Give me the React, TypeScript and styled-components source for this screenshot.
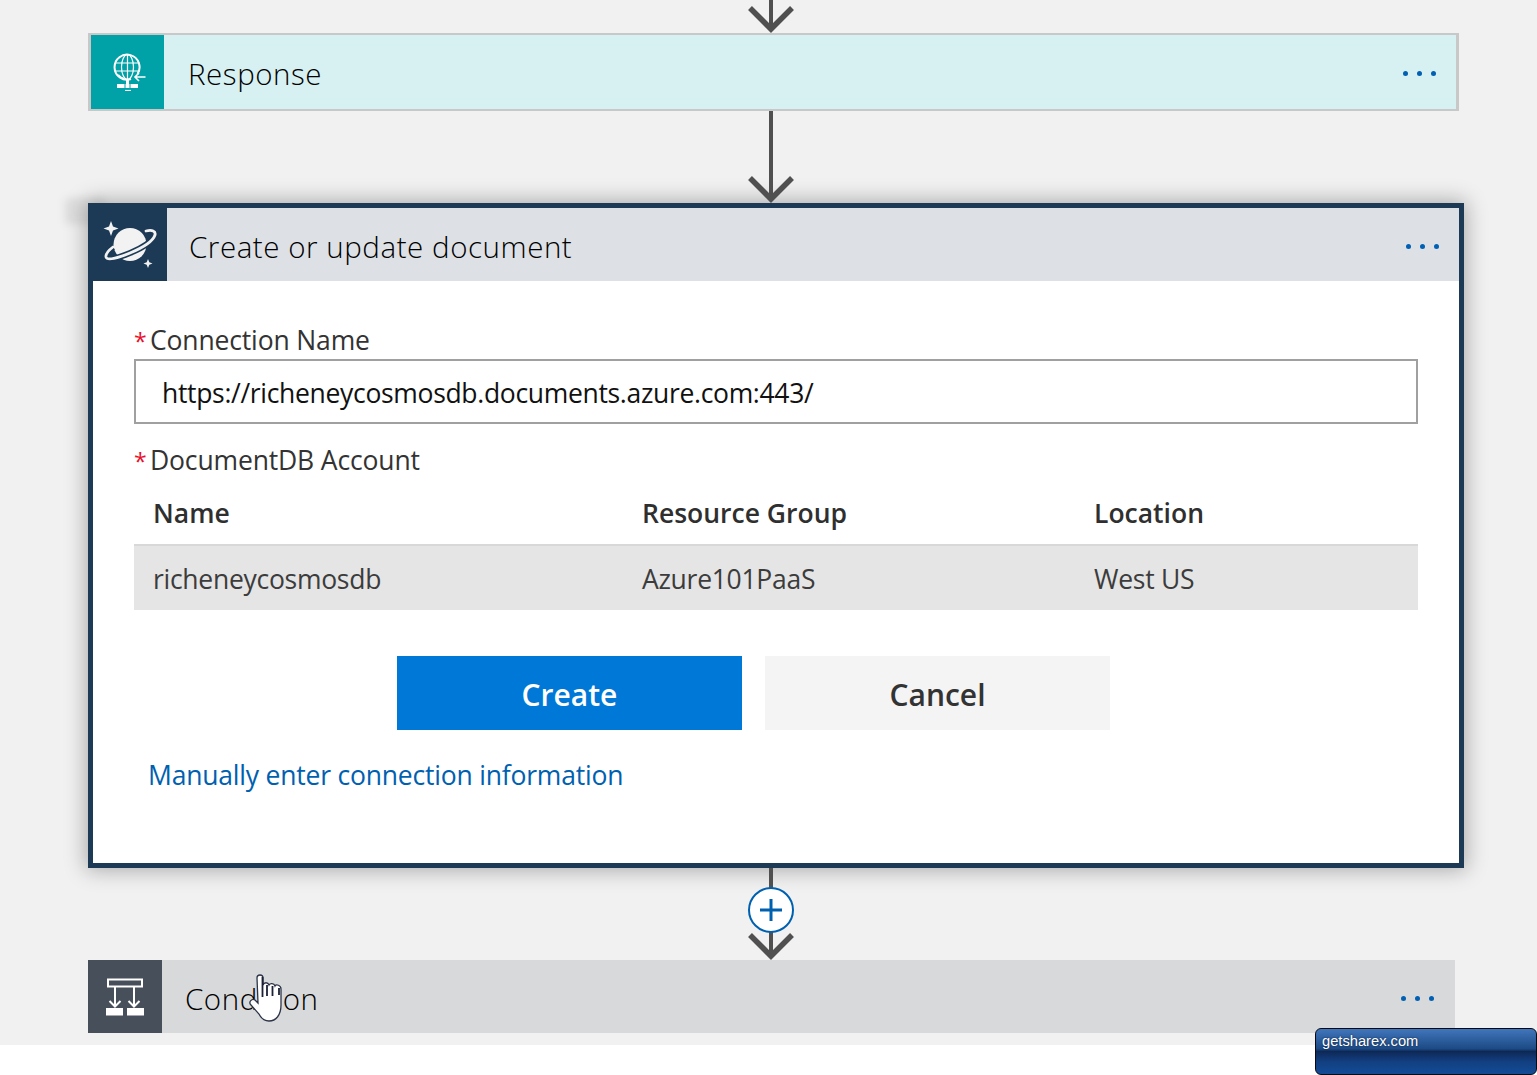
import styled, { createGlobalStyle } from "styled-components";

const Global = createGlobalStyle`
  html, body {
    margin: 0;
    padding: 0;
    background: #fff;
  }
  body {
    font-family: "Open Sans", "Noto Sans", sans-serif;
  }
`;

const Page = styled.div`
  position: relative;
  width: 1537px;
  height: 1075px;
  overflow: hidden;
  background: #fff;
`;

const Designer = styled.div`
  isolation: isolate;
  height: 1045px;
  padding-left: 88px;
  background: #f1f1f1;
  display: flex;
  flex-direction: column;
  align-items: flex-start;
`;

const Connector = styled.svg<{ $h: number }>`
  display: block;
  flex: none;
  width: 50px;
  height: ${(p) => p.$h}px;
  margin-left: 658px;
  position: relative;
  z-index: 2;
`;

const Step = styled.div<{ $w: number; $bg: string; $border: string }>`
  box-sizing: border-box;
  flex: none;
  width: ${(p) => p.$w}px;
  background: ${(p) => p.$bg};
  border: ${(p) => p.$border};
`;

const ResponseStep = styled(Step)`
  border-width: 2px 3px;
`;

const Header = styled.div<{ $bg: string; $h?: number }>`
  height: ${(p) => p.$h ?? 73}px;
  display: flex;
  align-items: center;
  background: ${(p) => p.$bg};
`;

const IconTile = styled.div<{ $bg: string; $w: number }>`
  flex: none;
  width: ${(p) => p.$w}px;
  height: 100%;
  background: ${(p) => p.$bg};
  display: flex;
  align-items: center;
  justify-content: center;
`;

const Title = styled.div<{ $left: number }>`
  flex: 1;
  margin: 4px 0 0 ${(p) => p.$left}px;
  font-size: 29.5px;
  font-weight: 300;
  letter-spacing: 0.55px;
  color: #000;
  line-height: 1.2;
`;

const More = styled.div<{ $right: number }>`
  display: flex;
  gap: 9px;
  margin: 3px ${(p) => p.$right}px 0 0;
`;

const Dot = styled.span`
  width: 5px;
  height: 5px;
  border-radius: 50%;
  background: #0060b4;
`;

const ActiveStep = styled(Step)`
  position: relative;
  box-shadow: 0 0 20px 2px rgba(0, 0, 0, 0.3);
  &::before {
    content: "";
    position: absolute;
    left: -28px;
    top: -10px;
    width: 40px;
    height: 26px;
    background: rgba(0, 0, 0, 0.08);
    filter: blur(4px);
    z-index: -1;
  }
`;

const Form = styled.div`
  height: 582px;
  box-sizing: border-box;
  padding: 41px 41px 0;
  background: #fff;
`;

const Label = styled.div`
  display: flex;
  align-items: baseline;
  height: 37px;
  font-size: 26.5px;
  line-height: 36px;
  color: #333;
  letter-spacing: -0.15px;
`;

const Required = styled.span`
  color: #e8112d;
  width: 16px;
  font-size: 23px;
`;

const TextInput = styled.input`
  box-sizing: border-box;
  display: block;
  width: 100%;
  height: 65px;
  padding: 2px 0 0 26px;
  border: 2px solid #a0a0a0;
  background: #fff;
  outline: none;
  font-family: inherit;
  font-size: 26.5px;
  letter-spacing: -0.32px;
  color: #111;
`;

const AccountLabel = styled(Label)`
  height: 36px;
  margin-top: 18px;
`;

const Row = styled.div`
  display: grid;
  grid-template-columns: 489px 452px 1fr;
  padding-left: 19px;
  align-items: center;
`;

const HeadRow = styled(Row)`
  box-sizing: border-box;
  height: 66px;
  padding-top: 4px;
  font-size: 26.5px;
  font-weight: 600;
  color: #2f2f2f;
`;

const DataRow = styled(Row)`
  height: 66px;
  box-sizing: border-box;
  padding-top: 2px;
  background: #e5e5e5;
  border-top: 2px solid #d8d8d8;
  font-size: 26.5px;
  color: #3c3c3c;
  letter-spacing: -0.28px;
`;

const Buttons = styled.div`
  display: flex;
  gap: 23px;
  margin: 46px 0 0 263px;
`;

const Button = styled.button<{ $primary?: boolean }>`
  width: 345px;
  height: 74px;
  padding: 2px 0 0;
  border: 0;
  font-family: inherit;
  font-size: 30px;
  font-weight: 600;
  background: ${(p) => (p.$primary ? "#0078d7" : "#f4f4f4")};
  color: ${(p) => (p.$primary ? "#fff" : "#333")};
`;

const ManualLink = styled.a`
  display: block;
  margin: 25px 0 0 14px;
  font-size: 26.5px;
  line-height: 40px;
  letter-spacing: -0.2px;
  color: #0060b0;
`;

const Cursor = styled.div`
  position: absolute;
  left: 245px;
  top: 972px;
  z-index: 3;
  line-height: 0;
`;

const Badge = styled.div`
  position: absolute;
  right: 0;
  bottom: 0;
  box-sizing: border-box;
  width: 222px;
  height: 47px;
  padding: 3px 0 0 6px;
  border: 1px solid #0a0a14;
  border-radius: 6px;
  background: linear-gradient(
    to bottom,
    #4176bc 0%,
    #1c4a85 44%,
    #0e2856 50%,
    #123f80 72%,
    #134c97 100%
  );
  font-family: "Liberation Sans", Arial, sans-serif;
  font-size: 14.7px;
  line-height: 18px;
  color: #fff;
  text-shadow: 0 0 2px #0b1a33;
`;

const Arrow = ({ h, plus }: { h: number; plus?: boolean }) => (
  <Connector $h={h} viewBox={`0 0 50 ${h}`}>
    <g stroke="#505050" fill="none">
      <path d={`M25 0V${h - 3}`} strokeWidth={4} />
      <path d={`M4 ${h - 25}L25 ${h - 4}L46 ${h - 25}`} strokeWidth={5.5} />
    </g>
    {plus && (
      <g>
        <circle cx={25} cy={42} r={22} fill="#fff" stroke="#0060b0" strokeWidth={2} />
        <path d="M14 42H36M25 31V53" stroke="#0060b0" strokeWidth={3} />
      </g>
    )}
  </Connector>
);

const GlobeIcon = () => (
  <svg width={36} height={38} viewBox="0 0 36 38" fill="none" stroke="#fff">
    <path d="M27.500 21A12.500 12.500 0 1 0 21 26" strokeWidth={2} />
    <path d="M14 26A12.500 12.500 0 0 1 8 22" strokeWidth={2} />
    <ellipse cx={17.500} cy={14} rx={6} ry={12.500} strokeWidth={1.2} />
    <path d="M17.500 2V26M5.500 10H29.500M5.500 18H29.500" strokeWidth={1.2} />
    <path d="M17.500 26V31" strokeWidth={3} />
    <path d="M35.500 24H25M29 20L25 24L29 28" strokeWidth={1.6} />
    <path d="M7 33H14.500M15.500 33H19.500M20.500 33H28" strokeWidth={4} />
    <path d="M15 37.500H21" strokeWidth={1.2} />
  </svg>
);

const RING =
  "M44 12C50 10.500 54 12 53 16C51 22 40 29 28 34C16 39 5 42 4 38C3.500 35 7 31 11 28";

const PlanetIcon = () => (
  <svg width={56} height={52} viewBox="0 0 56 52">
    <circle cx={28} cy={25.500} r={16.500} fill="#f2f2f2" />
    <path d={RING} fill="none" stroke="#1c3a56" strokeWidth={6} />
    <path d={RING} fill="none" stroke="#f2f2f2" strokeWidth={2.800} strokeLinecap="round" />
    <path d="M9 2L11 7.500L16.500 9.500L11 11.500L9 17L7 11.500L1.500 9.500L7 7.500Z" fill="#f2f2f2" />
    <path d="M46 40L47.300 43.200L50.500 44.500L47.300 45.800L46 49L44.700 45.800L41.500 44.500L44.700 43.200Z" fill="#f2f2f2" />
  </svg>
);

const ConditionIcon = () => (
  <svg width={38} height={38} viewBox="0 0 38 38" fill="none" stroke="#fff">
    <rect x={2} y={1.500} width={34} height={7} strokeWidth={2} />
    <path d="M9 8.500V28M28 8.500V28" strokeWidth={2} />
    <path d="M3.500 23L9 28.500L14.500 23M22.500 23L28 28.500L33.500 23" strokeWidth={2} />
    <path d="M0 30H17V37.500H0ZM21 30H38V37.500H21Z" fill="#fff" stroke="none" />
  </svg>
);

const HandCursor = () => (
  <svg width={40} height={52} viewBox="0 0 40 52">
    <path
      d="M12 6C12 2 18 2 18 6V13C19 10 23 10 24 13C25 11 29 11 30 14C31 12 36 13 36 17V33C36 43 31 49 24 49C19 49 16 46 14 42L6 33C3 30 7 26 10 28L13 31Z"
      fill="#fff"
      stroke="#2c3346"
      strokeWidth={1.300}
    />
    <path d="M17.500 5V25M22 13V24M27.500 14V24M34 16V23" stroke="#1b2236" strokeWidth={1.800} fill="none" />
  </svg>
);

const Dots = ({ right }: { right: number }) => (
  <More $right={right}>
    <Dot />
    <Dot />
    <Dot />
  </More>
);

const App = () => {
  return (
    <Page>
      <Global />
      <Designer>
        <Arrow h={33} />
        <ResponseStep $w={1371} $bg="#d7f0f1" $border="2px solid #c8c8c8">
          <Header $bg="#d7f0f1" $h={74}>
            <IconTile $bg="#00a1a7" $w={73}>
              <GlobeIcon />
            </IconTile>
            <Title $left={24}>Response</Title>
            <Dots right={20} />
          </Header>
        </ResponseStep>
        <Arrow h={92} />
        <ActiveStep $w={1376} $bg="#fff" $border="5px solid #1c3a56">
          <Header $bg="#dde0e5">
            <IconTile $bg="#1c3a56" $w={74}>
              <PlanetIcon />
            </IconTile>
            <Title $left={22}>Create or update document</Title>
            <Dots right={20} />
          </Header>
          <Form>
            <Label>
              <Required>*</Required>Connection Name
            </Label>
            <TextInput readOnly value="https://richeneycosmosdb.documents.azure.com:443/" />
            <AccountLabel>
              <Required>*</Required>DocumentDB Account
            </AccountLabel>
            <HeadRow>
              <span>Name</span>
              <span>Resource Group</span>
              <span>Location</span>
            </HeadRow>
            <DataRow>
              <span>richeneycosmosdb</span>
              <span>Azure101PaaS</span>
              <span>West US</span>
            </DataRow>
            <Buttons>
              <Button $primary>Create</Button>
              <Button>Cancel</Button>
            </Buttons>
            <ManualLink>Manually enter connection information</ManualLink>
          </Form>
        </ActiveStep>
        <Arrow h={92} plus />
        <Step $w={1367} $bg="#d8d9db" $border="0">
          <Header $bg="#d8d9db">
            <IconTile $bg="#474f5b" $w={74}>
              <ConditionIcon />
            </IconTile>
            <Title $left={23}>Condition</Title>
            <Dots right={21} />
          </Header>
        </Step>
      </Designer>
      <Cursor>
        <HandCursor />
      </Cursor>
      <Badge>getsharex.com</Badge>
    </Page>
  );
};

export default App;
